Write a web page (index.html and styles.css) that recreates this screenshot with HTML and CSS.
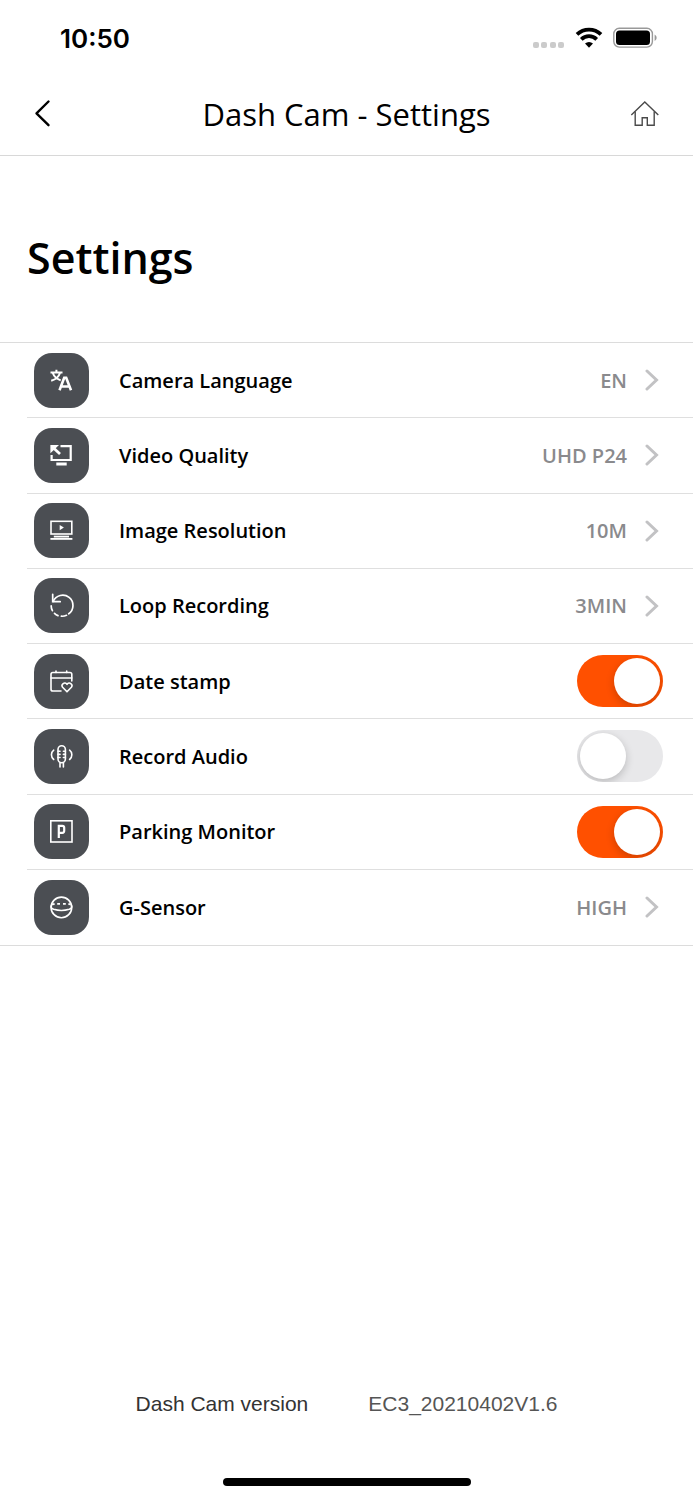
FILE: index.html
```html
<!DOCTYPE html>
<html lang="en">
<head>
    <meta charset="UTF-8" />
    <meta name="viewport" content="width=device-width, initial-scale=1.0" />
    <title>Dash Cam - Settings</title>
    <link rel="stylesheet" href="styles.css">
</head>
<body>
    <div class="status-bar">
        <span class="time">10:50</span>
        <div class="status-icons">
            <svg width="32" height="22" viewBox="0 0 32 22" fill="#cbcbcb">
                <rect x="0" y="15" width="6" height="6" rx="2" />
                <rect x="8" y="15" width="6" height="6" rx="2" />
                <rect x="17" y="15" width="6" height="6" rx="2" />
                <rect x="25" y="15" width="6" height="6" rx="2" />
            </svg>
            <svg width="28" height="22" viewBox="0 0 28 22" fill="none" stroke="#000">
                <path d="M2 7.3 A17.5 17.5 0 0 1 26 7.3" stroke-width="3.8" />
                <path d="M6.3 12.3 A11 11 0 0 1 21.7 12.3" stroke-width="3.8" />
                <path d="M10 16.5 A6 6 0 0 1 18 16.5 L14 20.8 Z" fill="#000" stroke="none" />
            </svg>
            <svg width="44" height="22" viewBox="0 0 44 22">
                <rect x="0.8" y="1.3" width="38.6" height="18.8" rx="5.5" fill="none" stroke="#999" stroke-width="1.4" />
                <rect x="3" y="3.5" width="34" height="14.5" rx="3.5" fill="#000" />
                <path d="M41.6 7.5 C44.3 9 44.3 12.5 41.6 14 Z" fill="#999" />
            </svg>
        </div>
    </div>

    <header class="nav-bar">
        <button class="nav-btn" aria-label="Back">
            <svg width="36" height="30" viewBox="0 0 36 30" fill="none" stroke="#000" stroke-width="2.4" stroke-linecap="round" stroke-linejoin="round">
                <path d="M20.5 2.5 L8.5 14.3 L20.5 26.2" />
            </svg>
        </button>
        <div class="nav-title">Dash Cam - Settings</div>
        <button class="nav-btn" aria-label="Home">
            <svg width="36" height="30" viewBox="0 0 36 30" fill="none" stroke="#4a4a4a" stroke-width="1.4">
                <path d="M2.3 16 L15.8 3 L29.3 16" />
                <path d="M6.2 12.5 V26.2 H13.2 V18.8 H18.3 V26.2 H25.2 V12.5" />
            </svg>
        </button>
    </header>

    <main>
        <h1>Settings</h1>

        <ul class="settings-list">
            <li>
                <button class="row">
                    <span class="icon">
                        <svg width="25" height="25" viewBox="0 0 25 25" fill="none" stroke="#fff" stroke-width="2">
                            <path d="M1.5 4.4 H13.5 M7.4 1.8 V4.5 M3.8 5 C5 8.5 8 11 11.7 12.4 M11 5 C9.7 9 6.7 11.5 2.2 12.7" />
                            <path d="M10.5 22.3 L15.2 9.8 H17.2 L22 22.3 M12.3 18.5 H20.2" stroke-width="2.6" />
                        </svg>
                    </span>
                    <span class="label">Camera Language</span>
                    <span class="value">EN</span>
                    <svg class="chevron" viewBox="0 0 18 22"><path d="M2 2 L11.5 11 L2 20" /></svg>
                </button>
            </li>
            <li>
                <button class="row">
                    <span class="icon">
                        <svg width="25" height="25" viewBox="0 0 25 25" fill="none" stroke="#fff" stroke-width="2.2">
                            <path d="M11.5 3.2 H21.7 V17 H2.6 V12" />
                            <path d="M4 4.5 L11 11" stroke-width="2.8" />
                            <path d="M1.4 2 H10 L1.4 10.2 Z" fill="#fff" stroke="none" />
                            <path d="M7.3 21 H17.7" stroke-width="3" />
                        </svg>
                    </span>
                    <span class="label">Video Quality</span>
                    <span class="value">UHD P24</span>
                    <svg class="chevron" viewBox="0 0 18 22"><path d="M2 2 L11.5 11 L2 20" /></svg>
                </button>
            </li>
            <li>
                <button class="row">
                    <span class="icon">
                        <svg width="25" height="25" viewBox="0 0 25 25" fill="none" stroke="#fff" stroke-width="1.6">
                            <rect x="2" y="3.3" width="20.8" height="12.7" />
                            <path d="M10.7 7 L14.9 9.6 L10.7 12.2 Z" fill="#fff" stroke="none" />
                            <path d="M4.8 18.6 H20" stroke-width="1.8" />
                            <path d="M1.4 20.9 H23.4" stroke-width="1.8" />
                        </svg>
                    </span>
                    <span class="label">Image Resolution</span>
                    <span class="value">10M</span>
                    <svg class="chevron" viewBox="0 0 18 22"><path d="M2 2 L11.5 11 L2 20" /></svg>
                </button>
            </li>
            <li>
                <button class="row">
                    <span class="icon">
                        <svg width="25" height="25" viewBox="0 0 25 25" fill="none" stroke="#fff" stroke-width="1.7" stroke-linecap="round">
                            <path d="M3.7 1.3 V8.7 H11.2" />
                            <path d="M4.2 8.4 A10.3 10.3 0 1 1 19.7 20.8" />
                            <path d="M17.5 22.3 A10.3 10.3 0 0 1 12.4 23.2 M9 22.6 A10.3 10.3 0 0 1 5.5 20.4 M3.4 17.7 A10.3 10.3 0 0 1 2.2 12.9" />
                        </svg>
                    </span>
                    <span class="label">Loop Recording</span>
                    <span class="value">3MIN</span>
                    <svg class="chevron" viewBox="0 0 18 22"><path d="M2 2 L11.5 11 L2 20" /></svg>
                </button>
            </li>
            <li>
                <label class="row">
                    <span class="icon">
                        <svg width="25" height="25" viewBox="0 0 25 25" fill="none" stroke="#fff" stroke-width="1.6" stroke-linecap="round" stroke-linejoin="round">
                            <path d="M12 22 H3.8 Q2 22 2 20.2 V5.3 Q2 3.5 3.8 3.5 H21 Q22.8 3.5 22.8 5.3 V12" />
                            <path d="M2 9 H22.8 M7 2 V3.5 M17.7 2 V3.5" />
                            <path d="M18 22.8 L13.6 18.3 C11.6 15.5 15.7 12 18 15.3 C20.3 12 24.4 15.5 22.4 18.3 Z" />
                        </svg>
                    </span>
                    <span class="label">Date stamp</span>
                    <input type="checkbox" class="toggle" checked>
                </label>
            </li>
            <li>
                <label class="row">
                    <span class="icon">
                        <svg width="25" height="25" viewBox="0 0 25 25" fill="none" stroke="#fff" stroke-width="1.6" stroke-linecap="round">
                            <rect x="9" y="1.8" width="7.4" height="17" rx="3.7" />
                            <path d="M9 7.3 H11 M14.4 7.3 H16.4 M9 10.4 H11 M14.4 10.4 H16.4 M9 13.5 H11 M14.4 13.5 H16.4" />
                            <path d="M11 19 V23 M14.4 19 V23" />
                            <path d="M4.7 6.2 C1.7 8.5 1.7 13.2 4.7 15.5 M20.6 6.2 C23.6 8.5 23.6 13.2 20.6 15.5" />
                        </svg>
                    </span>
                    <span class="label">Record Audio</span>
                    <input type="checkbox" class="toggle">
                </label>
            </li>
            <li>
                <label class="row">
                    <span class="icon">
                        <svg width="25" height="25" viewBox="0 0 25 25" fill="none" stroke="#fff" stroke-width="1.6">
                            <rect x="1.8" y="1.8" width="21.2" height="21.2" />
                            <path d="M9.8 19 V6.8 H13.3 Q15.2 6.8 15.2 8.8 V11.8 Q15.2 13.8 13.3 13.8 H9.8" stroke-width="2.2" />
                        </svg>
                    </span>
                    <span class="label">Parking Monitor</span>
                    <input type="checkbox" class="toggle" checked>
                </label>
            </li>
            <li>
                <button class="row">
                    <span class="icon">
                        <svg width="25" height="25" viewBox="0 0 25 25" fill="none" stroke="#fff" stroke-width="1.6">
                            <circle cx="12.4" cy="12.4" r="10.3" />
                            <path d="M2.2 10.5 Q1.2 13 4.7 14.3 Q12.4 16.7 20.2 14.3 Q23.6 13 22.6 10.5" />
                            <path d="M3 9.4 L5.6 9 M8.2 8.9 H11 M14 8.9 H16.8 M19.4 9 L21.8 9.4" stroke-width="1.8" />
                        </svg>
                    </span>
                    <span class="label">G-Sensor</span>
                    <span class="value">HIGH</span>
                    <svg class="chevron" viewBox="0 0 18 22"><path d="M2 2 L11.5 11 L2 20" /></svg>
                </button>
            </li>
        </ul>
    </main>

    <footer>
        <div class="version">
            <span>Dash Cam version</span>
            <span class="version-number">EC3_20210402V1.6</span>
        </div>
        <div class="home-indicator"></div>
    </footer>
</body>
</html>
```

FILE: styles.css
```css
* {
    box-sizing: border-box;
}

body {
    font-family: 'Open Sans', sans-serif;
    background: #fff;
    color: #000;
    min-height: 100vh;
    margin: 0;
    display: flex;
    flex-direction: column;
}

button {
    background: none;
    border: none;
    padding: 0;
    font-family: inherit;
    color: inherit;
    cursor: pointer;
}

svg {
    display: block;
}

.status-bar {
    display: flex;
    justify-content: space-between;
    align-items: center;
    height: 72px;
    padding: 4px 36px 0 60px;
}

.time {
    font-family: 'Inter', sans-serif;
    font-size: 26px;
    font-weight: 600;
}

.status-icons {
    display: flex;
    gap: 10px;
}

.nav-bar {
    display: flex;
    justify-content: space-between;
    align-items: center;
    height: 84px;
    padding: 0 28px;
    border-bottom: 1px solid #d8d8d8;
}

.nav-title {
    font-size: 31px;
    line-height: 40px;
    font-weight: 500;
}

h1 {
    margin: 0;
    padding: 76px 27px 58px;
    font-size: 43px;
    line-height: 52px;
    font-weight: 600;
}

.settings-list {
    display: grid;
    grid-auto-rows: 1fr;
    min-height: 604px;
    margin: 0;
    padding: 0 0 0 27px;
    list-style: none;
    border-top: 1px solid #dcdcdc;
    border-bottom: 1px solid #dcdcdc;
}

.settings-list li {
    display: flex;
    border-bottom: 1px solid #dfdfdf;
}

.settings-list li:last-child {
    border-bottom: none;
}

.row {
    display: flex;
    align-items: center;
    flex: 1;
    padding: 0 30px 0 7px;
    font-size: 20px;
    font-weight: 600;
    text-align: left;
    cursor: pointer;
}

.icon {
    display: flex;
    align-items: center;
    justify-content: center;
    width: 55px;
    height: 55px;
    margin-right: 30px;
    border-radius: 18px;
    background: #4b4e53;
}

.label {
    flex: 1;
}

.value {
    color: #8a8a8d;
    margin-right: 18px;
}

.chevron {
    width: 18px;
    height: 22px;
    fill: none;
    stroke: #c2c2c4;
    stroke-width: 3;
    stroke-linecap: round;
}

.toggle {
    appearance: none;
    display: flex;
    width: 86px;
    height: 52px;
    margin: 0;
    padding: 3px;
    border-radius: 26px;
    background: #e8e8ea;
    cursor: pointer;
    overflow: hidden;
}

.toggle::before {
    content: "";
    width: 46px;
    height: 46px;
    border-radius: 50%;
    background: #fff;
    box-shadow: 0 3px 8px rgba(0, 0, 0, 0.2);
}

.toggle:checked {
    justify-content: flex-end;
    background: #ff5000;
}

footer {
    margin-top: auto;
    padding: 0 20px 14px;
}

.version {
    display: flex;
    justify-content: center;
    gap: 60px;
    margin-bottom: 62px;
    font-family: 'Liberation Sans', sans-serif;
    font-size: 21px;
    line-height: 24px;
    color: #333;
}

.version-number {
    color: #555;
}

.home-indicator {
    width: 248px;
    height: 8px;
    margin: 0 auto;
    border-radius: 4px;
    background: #000;
}
```
